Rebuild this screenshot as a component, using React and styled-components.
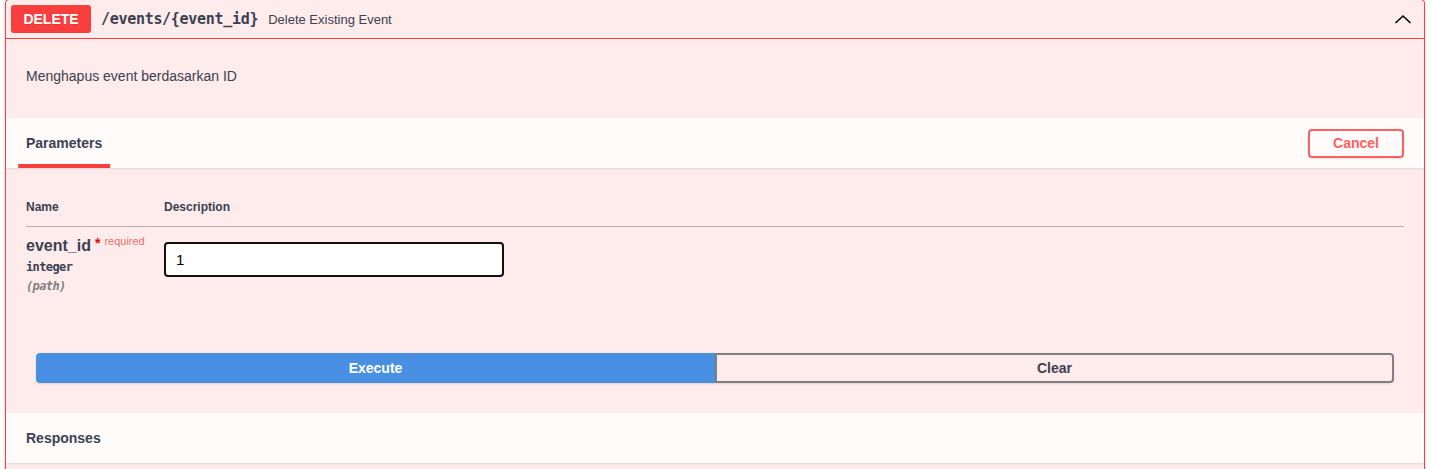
import React from "react";
import styled, { createGlobalStyle } from "styled-components";

const Global = createGlobalStyle`
  html, body { margin: 0; padding: 0; background: #fff; }
  body { font-family: "Liberation Sans", Arial, sans-serif; color: #3b4151; }
`;

const Page = styled.div`
  padding: 0 6px 0 5px;
  margin-top: -1px;
`;

const OpBlock = styled.div`
  border: 1px solid #f93e3e;
  border-radius: 4px;
  background: rgba(249, 62, 62, 0.1);
  box-shadow: 0 0 3px rgba(0, 0, 0, 0.19);
  overflow: hidden;
`;

const Summary = styled.div`
  display: flex;
  align-items: center;
  padding: 5px;
  border-bottom: 1px solid #f93e3e;
  cursor: pointer;
`;

const Method = styled.span`
  display: inline-block;
  min-width: 80px;
  padding: 6px 0;
  box-sizing: border-box;
  background: #f93e3e;
  color: #fff;
  border-radius: 3px;
  font: 700 14px/16px "Liberation Sans", Arial, sans-serif;
  text-align: center;
  text-shadow: 0 1px 0 rgba(0, 0, 0, 0.1);
`;

const Path = styled.span`
  padding: 0 10px;
  font: 700 15px/20px "DejaVu Sans Mono", monospace;
  letter-spacing: -0.3px;
  color: #3b4151;
`;

const SummaryDesc = styled.span`
  flex: 1;
  font-size: 13px;
  color: #3b4151;
`;

const Chevron = styled.svg`
  width: 20px;
  height: 20px;
  margin-right: 6px;
`;

const Description = styled.div`
  padding: 15px 20px;
  margin-bottom: 5px;
  p {
    margin: 14px 0;
    font-size: 14px;
    line-height: 16px;
    color: #3b4151;
  }
`;

const Filler = styled.div`
  height: 40px;
`;

const SectionHeader = styled.div`
  display: flex;
  align-items: center;
  justify-content: space-between;
  min-height: 50px;
  box-sizing: border-box;
  padding: 8px 20px;
  background: rgba(255, 255, 255, 0.8);
  box-shadow: 0 1px 2px rgba(0, 0, 0, 0.1);
`;

const TabTitle = styled.h4`
  margin: 0;
  font-size: 14px;
  font-weight: 700;
  color: #3b4151;
  span {
    position: relative;
    display: inline-block;
  }
  span::after {
    content: "";
    position: absolute;
    left: 50%;
    bottom: -17px;
    width: 120%;
    height: 4px;
    transform: translateX(-50%);
    background: #f93e3e;
  }
`;

const CancelButton = styled.button`
  font: 700 14px/17px "Liberation Sans", Arial, sans-serif;
  color: #ff6060;
  background: transparent;
  border: 2px solid #ff6060;
  border-radius: 4px;
  padding: 4px 23px;
  box-shadow: 0 1px 2px rgba(0, 0, 0, 0.1);
  cursor: pointer;
`;

const TableWrap = styled.div`
  padding: 20px;
`;

const Table = styled.table`
  width: 100%;
  border-collapse: collapse;
  th {
    text-align: left;
    font-size: 12px;
    font-weight: 700;
    padding: 12px 0;
    color: #3b4151;
    border-bottom: 1px solid rgba(59, 65, 81, 0.2);
  }
  td {
    vertical-align: top;
    padding: 10px 0;
  }
`;

const NameCol = styled.th`
  width: 138px;
`;

const ParamName = styled.div`
  font-size: 16px;
  font-weight: 700;
  color: #3b4151;
  line-height: 18px;
  white-space: nowrap;
  span.star {
    color: red;
    font-size: 14px;
    position: relative;
    top: -3px;
    padding-left: 4px;
  }
  span.req {
    font-size: 11px;
    color: rgba(255, 0, 0, 0.6);
    position: relative;
    top: -6px;
    padding-left: 4px;
    font-weight: 400;
  }
`;

const ParamMeta = styled.div`
  font: 600 12px/18px "DejaVu Sans Mono", monospace;
  letter-spacing: -0.6px;
  padding-top: ${(p) => (p.$first ? "2px" : "0")};
  margin-top: ${(p) => (p.$muted ? "1px" : "0")};
  color: ${(p) => (p.$muted ? "#808080" : "#3b4151")};
  font-style: ${(p) => (p.$muted ? "italic" : "normal")};
`;

const Input = styled.input`
  display: block;
  width: 340px;
  height: 35px;
  box-sizing: border-box;
  margin: 5px 0 0;
  padding: 8px 10px;
  border: 2px solid #111;
  border-radius: 4px;
  background: #fff;
  font: 15px "Liberation Sans", Arial, sans-serif;
  color: #000;
  outline: none;
`;

const BtnGroup = styled.div`
  display: flex;
  padding: 28px 30px 30px;
`;

const ExecButton = styled.button`
  flex: 1;
  height: 30px;
  font: 700 14px "Liberation Sans", Arial, sans-serif;
  border-radius: ${(p) => (p.$primary ? "4px 0 0 4px" : "0 4px 4px 0")};
  border: 2px solid ${(p) => (p.$primary ? "#4990e2" : "#808080")};
  background: ${(p) => (p.$primary ? "#4990e2" : "transparent")};
  color: ${(p) => (p.$primary ? "#fff" : "#3b4151")};
  box-shadow: 0 1px 2px rgba(0, 0, 0, 0.1);
  cursor: pointer;
`;

export default function App() {
  return (
    <>
      <Global />
      <Page>
        <OpBlock>
          <Summary>
            <Method>DELETE</Method>
            <Path>/events/&#123;event_id&#125;</Path>
            <SummaryDesc>Delete Existing Event</SummaryDesc>
            <Chevron viewBox="0 0 20 20">
              <polyline points="2.5,14 10,7 17.5,14" fill="none" stroke="#000" strokeWidth="1.6" />
            </Chevron>
          </Summary>
          <Description>
            <p>Menghapus event berdasarkan ID</p>
          </Description>
          <SectionHeader>
            <TabTitle>
              <span>Parameters</span>
            </TabTitle>
            <CancelButton>Cancel</CancelButton>
          </SectionHeader>
          <TableWrap>
            <Table>
              <thead>
                <tr>
                  <NameCol>Name</NameCol>
                  <th>Description</th>
                </tr>
              </thead>
              <tbody>
                <tr>
                  <td>
                    <ParamName>
                      event_id<span className="star">*</span>
                      <span className="req">required</span>
                    </ParamName>
                    <ParamMeta $first>integer</ParamMeta>
                    <ParamMeta $muted>(path)</ParamMeta>
                  </td>
                  <td>
                    <Input defaultValue="1" />
                  </td>
                </tr>
              </tbody>
            </Table>
          </TableWrap>
          <BtnGroup>
            <ExecButton $primary>Execute</ExecButton>
            <ExecButton>Clear</ExecButton>
          </BtnGroup>
          <SectionHeader>
            <TabTitle>Responses</TabTitle>
          </SectionHeader>
          <Filler />
        </OpBlock>
      </Page>
    </>
  );
}
